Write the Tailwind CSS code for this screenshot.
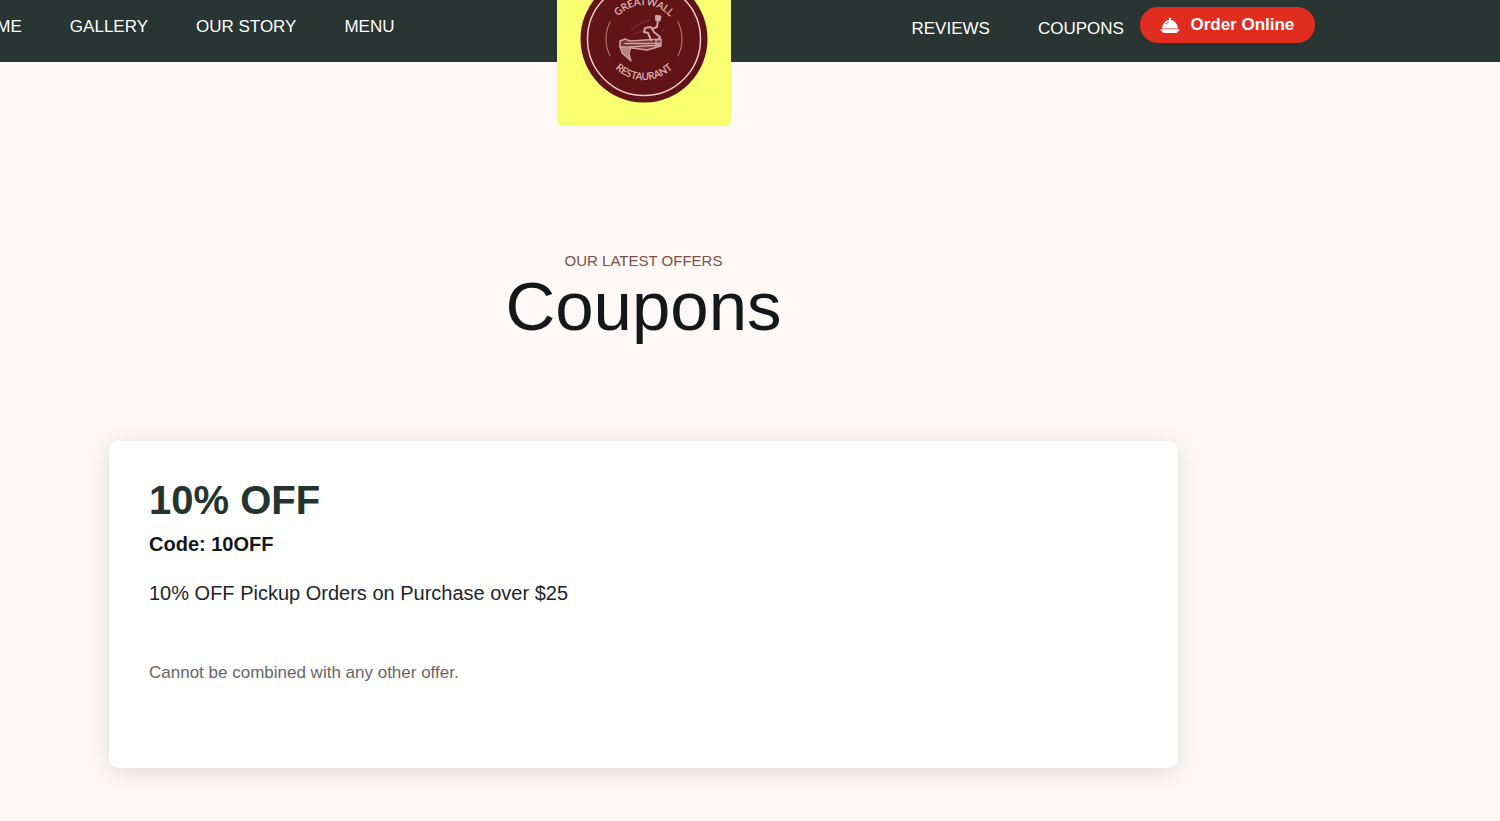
<!DOCTYPE html>
<html lang="en">
  <head>
    <meta charset="UTF-8" />
    <meta name="viewport" content="width=device-width, initial-scale=1.0" />
    <title>Coupons - Greatwall Restaurant</title>
    <script src="https://cdn.jsdelivr.net/npm/@tailwindcss/browser@4"></script>
  </head>
  <body
    class="min-h-screen overflow-x-hidden bg-[#fef9f6] font-['Liberation_Sans',Arial,sans-serif] text-[#14181b]"
  >
    <!-- Top Bar -->
    <header class="bg-[#283532] pr-[213px] text-[17px] leading-6 text-white">
      <div class="grid h-[62px] grid-cols-[minmax(0,1fr)_174px_minmax(0,1fr)]">
        <nav class="flex items-center justify-end gap-12 pr-[162px] pb-2 whitespace-nowrap">
          <a href="#">HOME</a>
          <a href="#">GALLERY</a>
          <a href="#">OUR STORY</a>
          <a href="#">MENU</a>
        </nav>

        <!-- Logo hangs below the bar -->
        <a href="#" class="relative" aria-label="Greatwall Restaurant">
          <svg
            class="absolute top-0 left-0 h-[126px] w-full rounded-b-[5px] bg-[#faff70]"
            viewBox="0 0 174 126"
            fill="none"
          >
            <defs>
              <path id="arc-top" d="M52 40a35 35 0 0 1 70 0" />
              <path id="arc-bottom" d="M46 39a41 41 0 0 0 82 0" />
            </defs>
            <circle cx="87" cy="39" r="63.5" fill="#611318" />
            <circle cx="87" cy="39" r="56.5" stroke="#e8c9c6" stroke-width="1.5" />
            <g
              fill="#dfbcb9"
              stroke="#dfbcb9"
              stroke-width=".2"
              font-family="Lato, sans-serif"
              font-size="10"
              text-anchor="middle"
            >
              <text>
                <textPath href="#arc-top" startOffset="50%">GREATWALL</textPath>
              </text>
              <text>
                <textPath href="#arc-bottom" startOffset="50%">RESTAURANT</textPath>
              </text>
            </g>
            <g stroke="#a8716f" stroke-width="1.2" stroke-linecap="round">
              <path d="M53 22q-8 17 0 34M121 22q8 17 0 34" />
            </g>
            <!-- Boat with its rower -->
            <g stroke="#cfa5a2" stroke-linecap="round" stroke-linejoin="round">
              <path d="M63 41l5-2 5 2 31-2v7l-14 4-15-2-12-1z" fill="#7d3638" stroke-width="1.5" />
              <path d="M63 47l2 6 9 8-2-8 2-6z" fill="#b58482" stroke-width="1.2" />
              <path d="M68 43.500h35M73 47l30-2M99 40v7" stroke-width="1.500" />
              <path d="M94 40l-3-7-4-1 1-4 6-1 3 5 6 5-2 3" stroke-width="2" />
              <path d="M95 29l5-2 1-8" stroke-width="2" />
              <path d="M99 15.500l5 .5-1 5-4-.5z" fill="#cfa5a2" />
              <path d="M74 30q9-8 19-10M76 35l9-4M104 32l3-3" stroke-width="1" stroke-opacity=".25" />
            </g>
          </svg>
        </a>

        <nav class="flex items-center gap-12 pb-1 pl-[181px] whitespace-nowrap">
          <a href="#">REVIEWS</a>
          <div class="flex items-center gap-4">
            <a href="#">COUPONS</a>
            <button
              class="-mt-2 flex h-9 w-[175px] shrink-0 items-center justify-center gap-[10px] rounded-full bg-[#e02d20] font-bold"
            >
              <svg class="h-5 w-5" viewBox="0 0 20 20" fill="currentColor" aria-hidden="true">
                <path
                  fill-rule="evenodd"
                  d="M8.600 3.600c0-.6.5-.8 1.400-.8s1.400.2 1.400.8c0 .4-.3.7-.7.8v.7c4 .4 6.800 4 7.300 8.400H2C2.500 9.100 5.300 5.500 9.300 5.100v-.7c-.4-.1-.7-.4-.7-.8zM5.500 9l.8.4c.6-1.200 1.300-1.800 2.500-2.200v-.8C7.200 6.800 6.200 7.600 5.500 9z"
                />
                <path d="M.5 14.300h19c0 1.400-.8 1.900-1.700 2.200-.3.900-.9 1.500-2 1.500H4.200c-1.100 0-1.700-.6-2-1.500-.9-.3-1.700-.8-1.700-2.200z" />
              </svg>
              <span>Order Online</span>
            </button>
          </div>
        </nav>
      </div>
    </header>

    <main class="pr-[213px]">
      <!-- Title -->
      <div class="pt-[189px] text-center">
        <p class="text-[15px] leading-5 text-[#7b4f48]">OUR LATEST OFFERS</p>
        <h1 class="text-[69px] leading-[72px]">Coupons</h1>
      </div>

      <!-- Coupon -->
      <section
        class="mx-[109px] mt-[98px] mb-12 rounded-[10px] bg-white px-10 pt-[35px] pb-[81px] shadow-[0_4px_24px_rgba(0,0,0,0.13)]"
      >
        <h2 class="text-[40px] leading-12 font-bold text-[#24352f]">10% OFF</h2>
        <p class="mt-1 text-[20px] leading-8 font-bold">Code: 10OFF</p>
        <p class="mt-[17px] text-[20px] leading-8 text-[#212529]">
          10% OFF Pickup Orders on Purchase over $25
        </p>
        <p class="mt-[50px] text-[17px] leading-7 text-[#666666]">
          Cannot be combined with any other offer.
        </p>
      </section>
    </main>
  </body>
</html>
